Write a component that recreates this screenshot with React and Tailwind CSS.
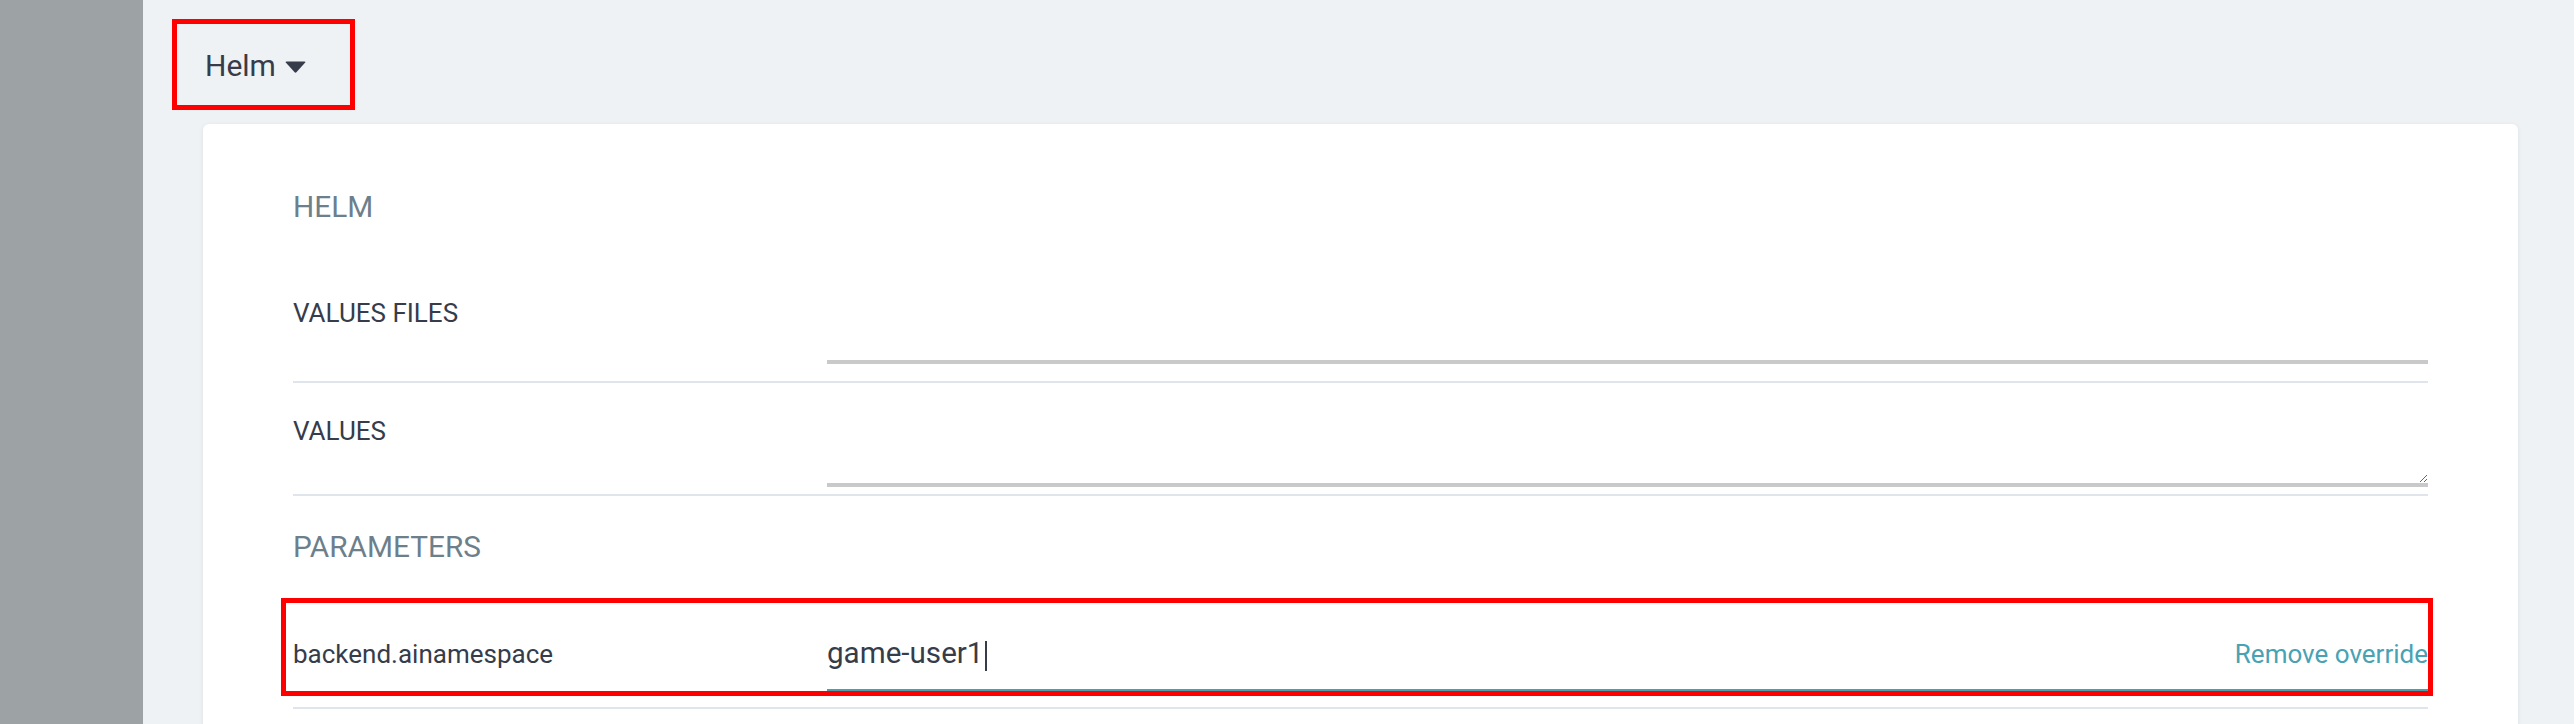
import React from 'react'

const font = { fontFamily: 'Roboto, "Liberation Sans", sans-serif' }

function Caret() {
  return (
    <svg width="21" height="12" viewBox="0 0 21 12" className="ml-[9px] mt-[2px] shrink-0">
      <path
        d="M1.6 0.4 H19.4 Q21 0.4 20 1.8 L11.6 11.1 Q10.5 12.3 9.4 11.1 L1 1.8 Q0 0.4 1.6 0.4 Z"
        fill="#363c4a"
      />
    </svg>
  )
}

export default function App() {
  return (
    <div className="flex h-screen overflow-hidden bg-[#eef2f5]" style={font}>
      {/* collapsed nav rail */}
      <div className="w-[143px] shrink-0 bg-[#9da2a5]" />

      <div className="flex-1 min-w-0">
        {/* section header */}
        <div className="pt-[19px] pl-[29px]">
          <div className="inline-flex items-center border-[5px] border-[#ff0000] pl-[28px] pr-[44px] pt-[25px] pb-[22px]">
            <span className="text-[30px] leading-[34px] text-[#363c4a]">Helm</span>
            <Caret />
          </div>
        </div>

        {/* card */}
        <div className="mt-[14px] ml-[60px] mr-[56px] rounded-md bg-white px-[90px] pt-[66px] pb-[60px] shadow-[0_1px_5px_rgba(0,0,0,0.07)]">
          <div className="text-[29.8px] leading-[34px] text-[#6d7f8b]">HELM</div>

          {/* values files */}
          <div className="flex items-start pt-[74px] pb-[17px] border-b-2 border-[#dfe5ea]">
            <div className="w-[534px] shrink-0 text-[26px] leading-[30px] text-[#363c4a]">VALUES FILES</div>
            <input
              readOnly
              className="flex-1 h-[66px] bg-transparent border-b-4 border-[#c9c9c9] outline-none"
            />
          </div>

          {/* values */}
          <div className="flex items-start pt-[33px] pb-[7px] border-b-2 border-[#dfe5ea]">
            <div className="w-[534px] shrink-0 text-[26px] leading-[30px] text-[#363c4a]">VALUES</div>
            <textarea
              readOnly
              className="flex-1 h-[71px] bg-transparent border-b-4 border-[#c9c9c9] outline-none resize-y block"
            />
          </div>

          <div className="mt-[34px] text-[29.8px] leading-[34px] text-[#6d7f8b]">PARAMETERS</div>

          {/* overridden parameter */}
          <div className="relative flex items-start pt-[72px] pb-[15px] border-b-2 border-[#dfe5ea]">
            <div className="w-[534px] shrink-0 mt-[3px] text-[26px] leading-[30px] text-[#363c4a]">
              backend.ainamespace
            </div>
            <div className="flex-1 flex items-baseline pb-[18px] border-b-[3px] border-[#4a9fae]">
              <span className="text-[29.6px] leading-[34px] text-[#363c4a]">game-user1</span>
              <span className="ml-[2px] w-[2px] h-[30px] self-end bg-[#363c4a]" />
              <span className="ml-auto text-[26px] leading-[34px] text-[#48a2b4] cursor-pointer">Remove override</span>
            </div>
            <div className="absolute left-[-12px] right-[-5px] top-[34px] bottom-[11px] border-[5px] border-[#ff0000] pointer-events-none" />
          </div>
        </div>
      </div>
    </div>
  )
}
